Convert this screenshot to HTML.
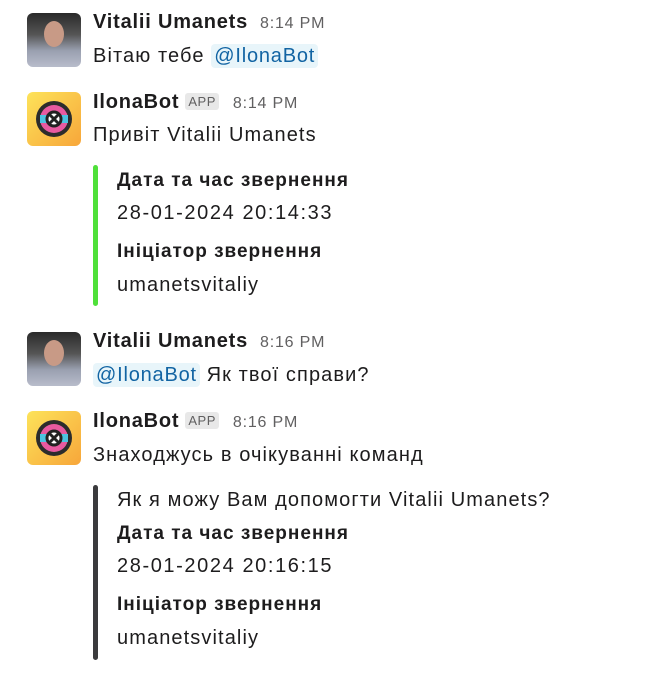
<!DOCTYPE html>
<html><head><meta charset="utf-8"><style>
body{margin:0;width:668px;height:680px;background:#fff;font-family:"Liberation Sans","Noto Sans CJK SC",sans-serif;color:#1d1c1d;position:relative;overflow:hidden}
.a{position:absolute;white-space:nowrap}
.av{position:absolute;width:54px;height:54px;border-radius:6px;overflow:hidden}
.person{background:linear-gradient(180deg,#2a2a2a 0,#555 40%,#9aa0b0 70%,#b8bccb 100%)}
.bot{background:linear-gradient(135deg,#fde35a,#f7a63a)}
.n{font-weight:bold;font-size:20px;letter-spacing:0.8px}
.t{font-size:16px;color:#616061;margin-left:12px;font-weight:normal;letter-spacing:0.8px}
.app{font-size:13px;color:#616061;background:#e8e8e8;border-radius:3px;padding:1px 3px;font-weight:normal;margin-left:6px;vertical-align:2px;letter-spacing:0.5px}
.m{font-size:20px;letter-spacing:1.1px}
.m .men{letter-spacing:0.8px}
.d{letter-spacing:1.6px}
.men{color:#1264a3;background:#e8f5fa;border-radius:4px;padding:1px 3px}
.b{font-weight:bold;font-size:19px;letter-spacing:1px}
.bar{position:absolute;width:5px;border-radius:3px}
</style></head><body>
<div class="av person" style="left:27px;top:13px"><div style="position:absolute;left:17px;top:8px;width:20px;height:26px;border-radius:50%;background:#c89a86"></div></div>
<div class="a n" style="left:93px;top:11px">Vitalii Umanets<span class="t">8:14 PM</span></div>
<div class="a m" style="left:93px;top:45px">Вітаю тебе <span class="men">@IlonaBot</span></div>

<div class="av bot" style="left:27px;top:92px"><svg width="54" height="54"><circle cx="27" cy="27" r="18" fill="#2c2c2c"/><circle cx="27" cy="27" r="14" fill="#e85aa0"/><rect x="13" y="23" width="28" height="8" fill="#4cc3e0"/><circle cx="27" cy="27" r="7" fill="#fff" stroke="#222" stroke-width="3"/><path d="M22 22l10 10M32 22l-10 10" stroke="#222" stroke-width="3"/></svg></div>
<div class="a n" style="left:93px;top:91px">IlonaBot<span class="app">APP</span><span class="t" style="margin-left:14px">8:14 PM</span></div>
<div class="a m" style="left:93px;top:124px">Привіт Vitalii Umanets</div>
<div class="bar" style="left:93px;top:165px;height:141px;background:#4fe03a"></div>
<div class="a b" style="left:117px;top:170px">Дата та час звернення</div>
<div class="a m d" style="left:117px;top:202px">28-01-2024 20:14:33</div>
<div class="a b" style="left:117px;top:241px">Ініціатор звернення</div>
<div class="a m" style="left:117px;top:274px">umanetsvitaliy</div>

<div class="av person" style="left:27px;top:332px"><div style="position:absolute;left:17px;top:8px;width:20px;height:26px;border-radius:50%;background:#c89a86"></div></div>
<div class="a n" style="left:93px;top:330px">Vitalii Umanets<span class="t">8:16 PM</span></div>
<div class="a m" style="left:93px;top:364px"><span class="men">@IlonaBot</span> Як твої справи?</div>

<div class="av bot" style="left:27px;top:411px"><svg width="54" height="54"><circle cx="27" cy="27" r="18" fill="#2c2c2c"/><circle cx="27" cy="27" r="14" fill="#e85aa0"/><rect x="13" y="23" width="28" height="8" fill="#4cc3e0"/><circle cx="27" cy="27" r="7" fill="#fff" stroke="#222" stroke-width="3"/><path d="M22 22l10 10M32 22l-10 10" stroke="#222" stroke-width="3"/></svg></div>
<div class="a n" style="left:93px;top:410px">IlonaBot<span class="app">APP</span><span class="t" style="margin-left:14px">8:16 PM</span></div>
<div class="a m" style="left:93px;top:444px">Знаходжусь в очікуванні команд</div>
<div class="bar" style="left:93px;top:485px;height:175px;background:#3b3b3d"></div>
<div class="a m" style="left:117px;top:489px">Як я можу Вам допомогти Vitalii Umanets?</div>
<div class="a b" style="left:117px;top:523px">Дата та час звернення</div>
<div class="a m d" style="left:117px;top:555px">28-01-2024 20:16:15</div>
<div class="a b" style="left:117px;top:594px">Ініціатор звернення</div>
<div class="a m" style="left:117px;top:627px">umanetsvitaliy</div>
</body></html>
